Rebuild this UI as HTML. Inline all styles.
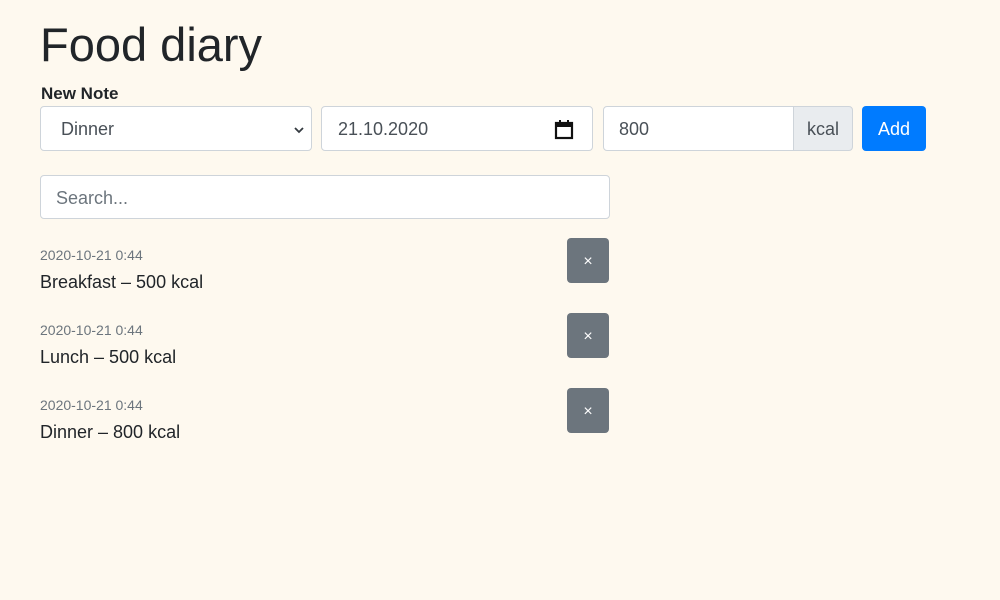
<!DOCTYPE html>
<html><head><style>
body{margin:0;width:1000px;height:600px;background:#fef9ef;font-family:"Liberation Sans",sans-serif;color:#212529;position:relative;overflow:hidden}
.a{position:absolute;box-sizing:border-box}
.in{background:#fff;border:1px solid #ced4da;border-radius:4px;font-size:18px;color:#495057;display:flex;align-items:center;padding-left:16px;padding-top:2px}
.x{background:#6c757d;border-radius:4px;width:42px;height:45px;color:#fff;font-size:16px;display:flex;align-items:center;justify-content:center;padding-top:3px}
.d{font-size:14px;color:#6c757d}
.t{font-size:18px}
</style></head><body>
<div class="a" style="left:40px;top:16px;font-size:47px;line-height:58px">Food diary</div>
<div class="a" style="left:41px;top:84px;font-size:17px;font-weight:bold">New Note</div>
<div class="a in" style="left:40px;top:106px;width:272px;height:45px;padding-left:20px">Dinner
<svg style="position:absolute;right:7px;top:19px" width="10" height="8" viewBox="0 0 10 8"><path d="M1 2l4 4 4-4" stroke="#343a40" stroke-width="1.8" fill="none"/></svg></div>
<div class="a in" style="left:321px;top:106px;width:272px;height:45px">21.10.2020
<svg style="position:absolute;right:18px;top:12px" width="20" height="21" viewBox="0 0 20 21"><rect x="2" y="4" width="16" height="15" fill="none" stroke="#111" stroke-width="2.2"/><rect x="2" y="4" width="16" height="4" fill="#111"/><rect x="5" y="1" width="2" height="4" fill="#111"/><rect x="13" y="1" width="2" height="4" fill="#111"/></svg></div>
<div class="a in" style="left:603px;top:106px;width:191px;height:45px;border-radius:4px 0 0 4px;padding-left:15px">800</div>
<div class="a" style="left:793px;top:106px;width:60px;height:45px;background:#e9ecef;border:1px solid #ced4da;border-radius:0 4px 4px 0;font-size:18px;color:#495057;display:flex;align-items:center;justify-content:center;padding-top:2px">kcal</div>
<div class="a" style="left:862px;top:106px;width:64px;height:45px;background:#007bff;border-radius:4px;color:#fff;font-size:18px;display:flex;align-items:center;justify-content:center;padding-top:2px">Add</div>
<div class="a in" style="left:40px;top:175px;width:570px;height:44px;color:#6c757d;padding-left:15px">Search...</div>

<div class="a d" style="left:40px;top:247px">2020-10-21 0:44</div>
<div class="a t" style="left:40px;top:272px">Breakfast – 500 kcal</div>
<div class="a x" style="left:567px;top:238px">×</div>

<div class="a d" style="left:40px;top:322px">2020-10-21 0:44</div>
<div class="a t" style="left:40px;top:347px">Lunch – 500 kcal</div>
<div class="a x" style="left:567px;top:313px">×</div>

<div class="a d" style="left:40px;top:397px">2020-10-21 0:44</div>
<div class="a t" style="left:40px;top:422px">Dinner – 800 kcal</div>
<div class="a x" style="left:567px;top:388px">×</div>
</body></html>
